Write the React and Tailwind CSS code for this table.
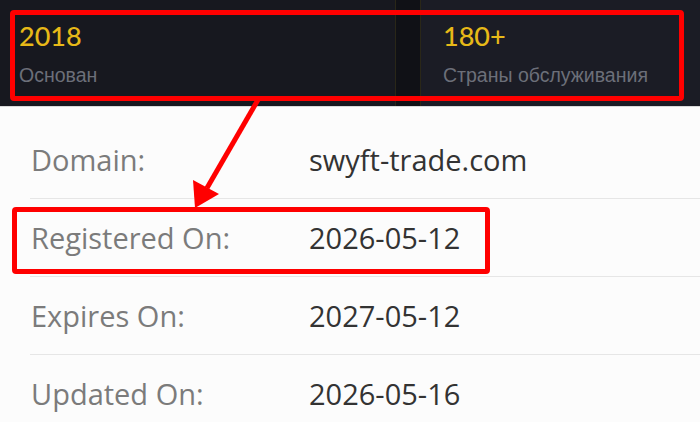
export default function App() {
  const rows = [
    { label: "Domain:", value: "swyft-trade.com" },
    { label: "Registered On:", value: "2026-05-12" },
    { label: "Expires On:", value: "2027-05-12" },
    { label: "Updated On:", value: "2026-05-16" },
  ];

  return (
    <div className="relative w-[700px] h-[439px] overflow-hidden bg-white">
      {/* Stats strip */}
      <div className="flex h-[107px] bg-[#15161d] border-b border-[#d9d9d9]">
        <div className="w-[396px] bg-[#17181f] pl-[19px] pt-[20px] border-r border-[#2a2718]">
          <div className="text-[27px] leading-[32px] text-[#e7b918] font-['Lato',sans-serif] font-medium">2018</div>
          <div className="mt-[11px] text-[19.5px] leading-[24px] text-[#6c6f79] font-['Liberation_Sans',sans-serif]">Основан</div>
        </div>
        <div className="w-[24px] bg-[#101116]" />
        <div className="flex-1 bg-[#1b1c25] pl-[22px] pt-[20px] border-l border-[#2a2718]">
          <div className="text-[27px] leading-[32px] text-[#e7b918] font-['Lato',sans-serif] font-medium">180+</div>
          <div className="mt-[11px] text-[19.5px] leading-[24px] text-[#6c6f79] font-['Liberation_Sans',sans-serif]">Страны обслуживания</div>
        </div>
      </div>

      {/* Whois table */}
      <div className="bg-[#fcfcfc] pt-[14px] pl-[30px] h-[315px] font-['Open_Sans',sans-serif]">
        {rows.map((r, i) => (
          <div
            key={r.label}
            className={`flex items-center h-[78px] ${i < rows.length - 1 ? "border-b border-[#e6e6e6]" : ""}`}
          >
            <div className="w-[279px] pl-[1px] text-[29px] text-[#7b7b7b]">{r.label}</div>
            <div className="text-[29px] text-[#333333]">{r.value}</div>
          </div>
        ))}
      </div>

      {/* Annotations */}
      <div className="absolute left-[10px] top-[10px] w-[674px] h-[91px] border-[5px] border-[#ff0000] rounded-[4px]" />
      <div className="absolute left-[12px] top-[207px] w-[478px] h-[67px] border-[5px] border-[#ff0000] rounded-[4px]" />
      <svg className="absolute left-0 top-0" width="700" height="439">
        <line x1="259" y1="98" x2="207" y2="188" stroke="#ff0000" strokeWidth="5" />
        <polygon points="195,208 193,180 219,194" fill="#ff0000" />
      </svg>
    </div>
  );
}
